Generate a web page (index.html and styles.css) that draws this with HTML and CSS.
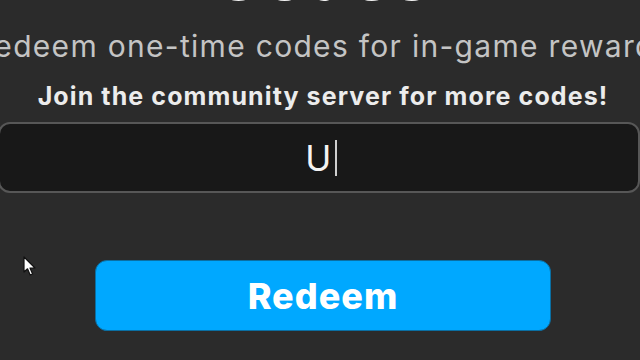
FILE: index.html
```html
<!DOCTYPE html>
<html lang="en">
<head>
    <meta charset="UTF-8">
    <meta name="viewport" content="width=device-width, initial-scale=1.0">
    <title>Codes</title>
    <link rel="stylesheet" href="styles.css">
</head>
<body>

    <div class="panel">
        <h1 class="title">Codes</h1>
        <p class="subtitle">Redeem one-time codes for in-game rewards</p>
        <p class="hint">Join the community server for more codes!</p>

        <div class="code-box">
            <span class="code-text">U</span><span class="caret"></span>
        </div>

        <button class="redeem">Redeem</button>
    </div>

    <!-- mouse pointer over the page -->
    <svg class="pointer" width="14" height="22" viewBox="0 0 14 22">
        <path d="M1 1 L1 16 L4.5 12.8 L7.2 19 L9.6 18 L7 12 L12 12 Z" fill="#fff" stroke="#111" stroke-width="1.2" stroke-linejoin="round"/>
    </svg>

</body>
</html>
```

FILE: styles.css
```css
html, body { margin: 0; height: 100%; }
body { background-color: #2b2b2b; font-family: Inter, "Noto Sans", sans-serif; overflow: hidden; position: relative; }
.panel { width: 640px; margin-left: 3px; display: flex; flex-direction: column; align-items: center; }
.title { margin: -57px 0 0; font-size: 66px; font-weight: 800; color: #f2f2f2; line-height: 66px; letter-spacing: 2px; }
.subtitle { margin: 19px 0 0; font-size: 30px; line-height: 36px; color: #c4c4c4; white-space: nowrap; letter-spacing: 1.3px; }
.hint { margin: 17px 0 0; font-size: 25px; line-height: 30px; font-weight: 700; color: #ececec; white-space: nowrap; letter-spacing: 1.1px; }
.code-box { box-sizing: border-box; width: 642px; height: 71px; margin-top: 11px; margin-left: -8px; background-color: #181818; border: 2px solid #575757; border-radius: 12px; display: flex; justify-content: center; align-items: center; }
.code-text { font-size: 35px; color: #f4f4f4; font-weight: 400; margin-left: 4px; }
.caret { width: 1.5px; height: 36px; margin-left: 4px; background-color: #cfcfcf; }
.redeem { box-sizing: border-box; width: 456px; height: 71px; margin-top: 67px; background-color: #00a8ff; color: #fff; border: 1.5px solid #0a6fa3; border-radius: 12px; font-family: Inter, sans-serif; font-size: 36px; font-weight: 800; letter-spacing: 1px; cursor: pointer; }
.pointer { position: absolute; left: 23px; top: 256px; }
```
